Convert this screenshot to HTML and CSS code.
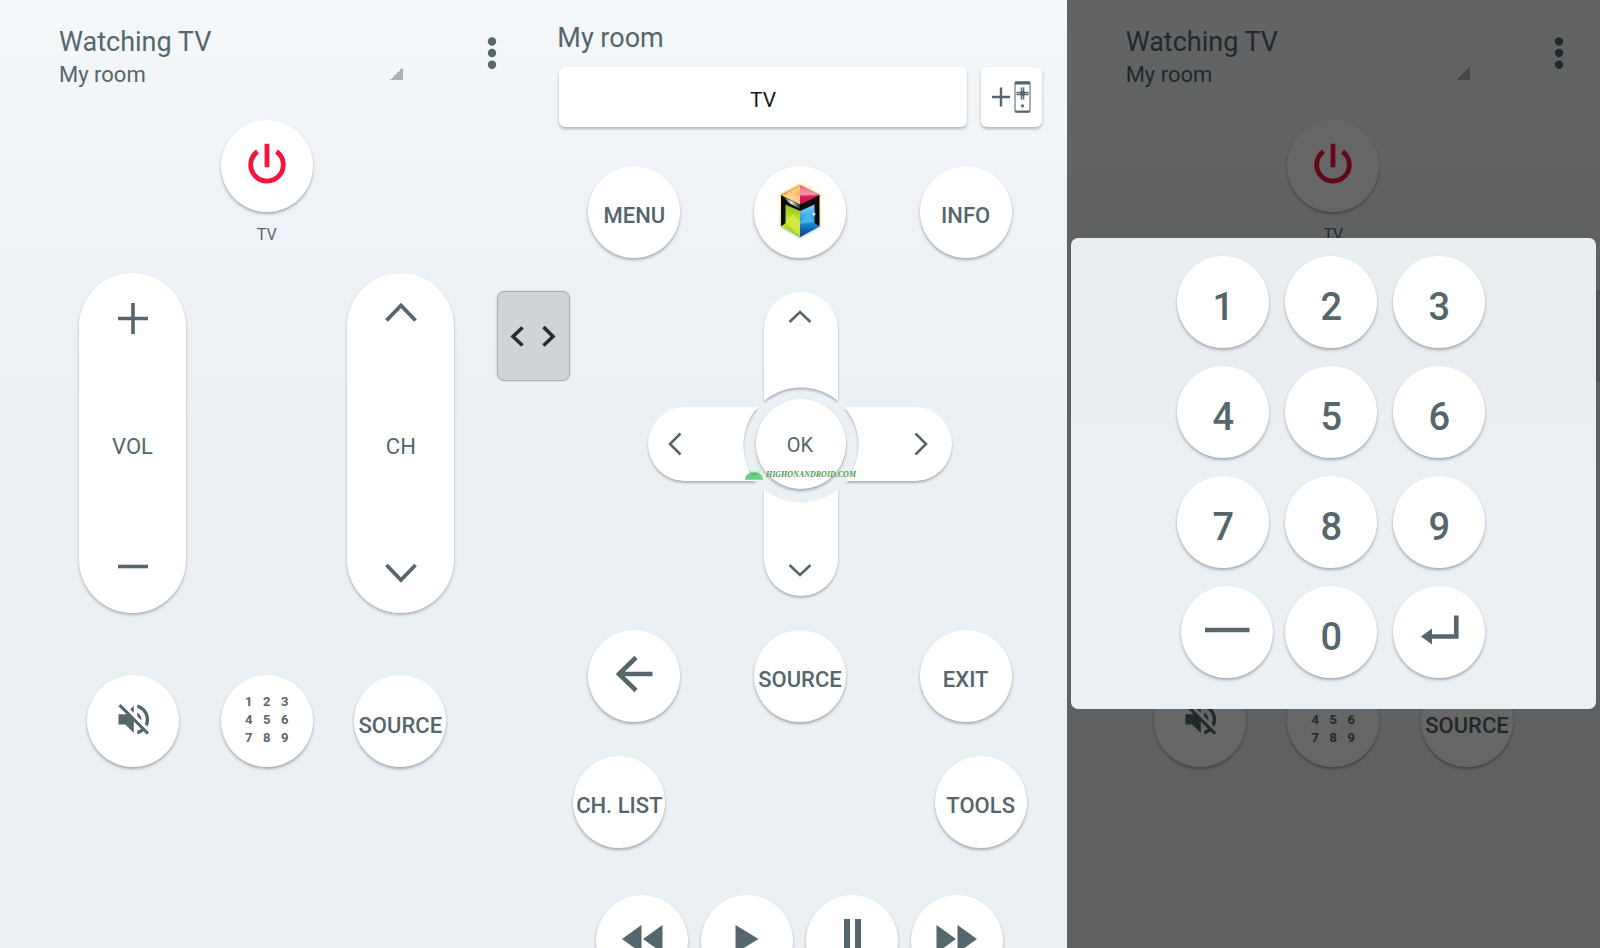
FILE: index.html
```html
<!DOCTYPE html>
<html lang="en">
<head>
<meta charset="utf-8">
<meta name="viewport" content="width=device-width, initial-scale=1">
<title>Watching TV</title>
<link rel="stylesheet" href="styles.css">
</head>
<body>
<svg class="defs" aria-hidden="true">
  <symbol id="power" viewBox="0 0 92 92"><path d="M36.5 31.5A16.3 16.3 0 1 0 55.5 31.5M46 23.7V47.3" fill="none" stroke="#f4143c" stroke-width="4.8"/></symbol>
  <symbol id="mute" viewBox="0 0 92 92"><path transform="translate(26.4 24) scale(1.7)" fill="currentColor" d="M16.5 12c0-1.77-1.02-3.29-2.5-4.03v2.21l2.45 2.45c.03-.2.05-.41.05-.63zm2.5 0c0 .94-.2 1.82-.54 2.64l1.51 1.51C20.63 14.91 21 13.5 21 12c0-4.28-2.99-7.86-7-8.77v2.06c2.89.86 5 3.54 5 6.71zM4.27 3L3 4.27 7.73 9H3v6h4l5 5v-6.73l4.25 4.25c-.67.52-1.42.93-2.25 1.18v2.06c1.38-.31 2.63-.95 3.69-1.81L19.73 21 21 19.73l-9-9L4.27 3zM12 4L9.91 6.09 12 8.18V4z"/></symbol>
  <symbol id="dots" viewBox="0 0 16 54"><g fill="currentColor"><circle cx="8" cy="15.5" r="4.2"/><circle cx="8" cy="27" r="4.2"/><circle cx="8" cy="38.8" r="4.2"/></g></symbol>
  <symbol id="plus" viewBox="0 0 32 42"><path d="M1 21.500H31M16 6V37" fill="none" stroke="currentColor" stroke-width="3.6"/></symbol>
  <symbol id="minus" viewBox="0 0 32 42"><path d="M1 21.500H31" fill="none" stroke="currentColor" stroke-width="3.6"/></symbol>
  <symbol id="up" viewBox="0 0 32 42"><path d="M1.500 23.500L16 8.500 30.500 23.500" fill="none" stroke="currentColor" stroke-width="3.8"/></symbol>
  <symbol id="down" viewBox="0 0 32 42"><path d="M1.500 20L16 35 30.500 20" fill="none" stroke="currentColor" stroke-width="3.8"/></symbol>
</svg>
<main class="app">
  <section class="panel">
    <header class="bar">
      <button class="spinner" type="button">
        <span class="title">Watching TV</span>
        <span class="room">My room</span>
      </button>
      <button class="more" type="button" aria-label="More options"><svg><use href="#dots"/></svg></button>
    </header>
    <div class="power">
      <button class="round" type="button" aria-label="Power"><svg><use href="#power"/></svg></button>
      <span class="caption">TV</span>
    </div>
    <div class="rockers">
      <div class="rocker" role="group" aria-label="Volume">
        <button type="button" aria-label="Volume up"><svg><use href="#plus"/></svg></button>
        <span>VOL</span>
        <button type="button" aria-label="Volume down"><svg><use href="#minus"/></svg></button>
      </div>
      <div class="rocker" role="group" aria-label="Channel">
        <button type="button" aria-label="Channel up"><svg><use href="#up"/></svg></button>
        <span>CH</span>
        <button type="button" aria-label="Channel down"><svg><use href="#down"/></svg></button>
      </div>
    </div>
    <div class="shortcuts">
      <button class="round" type="button" aria-label="Mute"><svg><use href="#mute"/></svg></button>
      <button class="round digits" type="button" aria-label="Number pad"><span>1</span><span>2</span><span>3</span><span>4</span><span>5</span><span>6</span><span>7</span><span>8</span><span>9</span></button>
      <button class="round" type="button">SOURCE</button>
    </div>
    <button class="handle" type="button" aria-label="Slide panel"><svg viewBox="0 0 73 90"><path d="M25.500 36.500L16 45.500 25.500 54.500M46.500 36L56 45.500 46.500 54.500" fill="none" stroke="#2b2b2e" stroke-width="3.6"/></svg></button>
  </section>

  <section class="panel controls">
    <h1 class="title">My room</h1>
    <div class="devices">
      <button class="device" type="button">TV</button>
      <button class="add" type="button" aria-label="Add remote">
        <svg viewBox="0 0 61 60"><g fill="none" stroke="currentColor"><path d="M11 30H29M20 20.500V39.500" stroke-width="2.4"/><rect x="34" y="15" width="15" height="30" rx="1.5" stroke-width="1.3" opacity=".8"/><path d="M34 16H49" stroke-width="3"/><path d="M34 44.500H49" stroke-width="2"/><path d="M35.500 26.500H47.500M41.500 20.500V32.500" stroke-width="3.6"/></g><path d="M36 26.500H39M44 26.500H47M41.500 21V24M41.500 29V32" stroke="#fff" stroke-width=".8" opacity=".8"/><circle cx="41.5" cy="38.800" r="1.6" fill="currentColor"/></svg>
      </button>
    </div>
    <div class="row first">
      <button class="round" type="button">MENU</button>
      <button class="round" type="button" aria-label="Smart Hub">
        <svg viewBox="0 0 92 92">
          <defs>
            <filter id="glow" x="-20%" y="-20%" width="140%" height="140%"><feGaussianBlur stdDeviation="1.3"/></filter>
            <linearGradient id="edge" x2="0" y2="1"><stop stop-color="#ffb45a"/><stop offset=".35" stop-color="#ffe9a0"/><stop offset=".6" stop-color="#d8f080"/><stop offset="1" stop-color="#62c6f5"/></linearGradient>
            <linearGradient id="warm" x2="1" y2="1"><stop stop-color="#f08a2c"/><stop offset=".5" stop-color="#fbd07a"/><stop offset="1" stop-color="#f08a5a"/></linearGradient>
            <linearGradient id="pink" x2="0" y2="1"><stop stop-color="#f0607a"/><stop offset=".45" stop-color="#f29ab0"/><stop offset=".6" stop-color="#e2256a"/><stop offset="1" stop-color="#d80f58"/></linearGradient>
            <linearGradient id="green" x2="0" y2="1"><stop stop-color="#8cc41c"/><stop offset=".45" stop-color="#c4e02e"/><stop offset="1" stop-color="#a2cc20"/></linearGradient>
            <linearGradient id="blue" x2="0" y2="1"><stop stop-color="#86d0f4"/><stop offset=".5" stop-color="#1d9ee0"/><stop offset=".75" stop-color="#1467b8"/><stop offset="1" stop-color="#2a2f8c"/></linearGradient>
            <linearGradient id="shine"><stop stop-color="#222"/><stop offset=".5" stop-color="#e8e8e8"/><stop offset="1" stop-color="#222"/></linearGradient>
          </defs>
          <path d="M46 18.500L66 28.500V60.500L46 71.500 26.500 60.500V28.500Z" fill="url(#edge)" stroke="url(#edge)" stroke-width="1" filter="url(#glow)"/>
          <path d="M46 19.500L65.500 29V59.500L46 70.500 27 59.500V29Z" fill="#0b0b0b"/>
          <path d="M46 19.500V38.500L27 29Z" fill="url(#warm)"/>
          <path d="M46 19.500V38.500L65.500 29Z" fill="url(#pink)"/>
          <path d="M27 29L46 30V38.500Z" fill="#ffe3a8" opacity=".55"/>
          <path d="M46 30L65.500 29 46 38.500Z" fill="#d80f58" opacity=".6"/>
          <path d="M29 30.500L46 39V43L35 37Z" fill="url(#shine)"/>
          <path d="M31.500 38.500L46 45V71L27 60.500 31.500 57Z" fill="url(#green)"/>
          <path d="M46 45L60.500 38.500V57L65.500 60.500 46 71Z" fill="url(#blue)"/>
          <path d="M31.500 56L39 48 46 56V70Z" fill="#e4ee52" opacity=".6"/>
          <path d="M46 56L54 48 60.500 56 46 58Z" fill="#5ec2f2" opacity=".6"/>
          <circle cx="60" cy="48" r="1.500" fill="#e8f8ff"/>
        </svg>
      </button>
      <button class="round" type="button">INFO</button>
    </div>
    <div class="dpad">
      <button class="arm arm-up" type="button" aria-label="Up"><svg viewBox="0 0 24 24"><path d="M1.500 17L12 7 22.500 17"/></svg></button>
      <button class="arm arm-left" type="button" aria-label="Left"><svg viewBox="0 0 24 24"><path d="M17.500 1.500L7 12 17.500 22.500"/></svg></button>
      <button class="ok" type="button">OK</button>
      <button class="arm arm-right" type="button" aria-label="Right"><svg viewBox="0 0 24 24"><path d="M6.500 1.500L17 12 6.500 22.500"/></svg></button>
      <button class="arm arm-down" type="button" aria-label="Down"><svg viewBox="0 0 24 24"><path d="M1.500 7L12 17 22.500 7"/></svg></button>
      <div class="watermark">
        <svg viewBox="0 0 18 10"><path d="M0 9.500C1 4.500 4.500 2 9 2S17 4.500 18 9.500ZM4 0L6 4M14 0L12 4" fill="#6fd083" stroke="#6fd083" stroke-width=".6"/><path d="M6 4.500H12" stroke="#3fae55" stroke-width="1"/></svg>
        <span>HIGHONANDROID.COM</span>
      </div>
    </div>
    <div class="row second">
      <button class="round" type="button" aria-label="Back"><svg viewBox="0 0 92 92"><path d="M64.500 44H31M48 27.500L31 44 48 60.500" fill="none" stroke="currentColor" stroke-width="4.600"/></svg></button>
      <button class="round" type="button">SOURCE</button>
      <button class="round" type="button">EXIT</button>
    </div>
    <div class="row third">
      <button class="round" type="button">CH. LIST</button>
      <button class="round" type="button">TOOLS</button>
    </div>
    <div class="playback">
      <button class="round" type="button" aria-label="Rewind"><svg viewBox="0 0 92 92"><path d="M45.500 30V58L26 44ZM66.500 30V58L47 44Z" fill="currentColor"/></svg></button>
      <button class="round" type="button" aria-label="Play"><svg viewBox="0 0 92 92"><path d="M34.500 30V58L57.500 44Z" fill="currentColor"/></svg></button>
      <button class="round" type="button" aria-label="Pause"><svg viewBox="0 0 92 92"><path d="M38 24H44V64H38ZM49 24H55V64H49Z" fill="currentColor"/></svg></button>
      <button class="round" type="button" aria-label="Fast forward"><svg viewBox="0 0 92 92"><path d="M25.500 30V58L45 44ZM46.500 30V58L66 44Z" fill="currentColor"/></svg></button>
    </div>
  </section>

  <section class="panel dimmed">
    <header class="bar">
      <button class="spinner" type="button">
        <span class="title">Watching TV</span>
        <span class="room">My room</span>
      </button>
      <button class="more" type="button" aria-label="More options"><svg><use href="#dots"/></svg></button>
    </header>
    <div class="power">
      <button class="round" type="button" aria-label="Power"><svg><use href="#power"/></svg></button>
      <span class="caption">TV</span>
    </div>
    <div class="rockers"><div class="rocker"></div></div>
    <div class="shortcuts">
      <button class="round" type="button" aria-label="Mute"><svg><use href="#mute"/></svg></button>
      <button class="round digits" type="button" aria-label="Number pad"><span>1</span><span>2</span><span>3</span><span>4</span><span>5</span><span>6</span><span>7</span><span>8</span><span>9</span></button>
      <button class="round" type="button">SOURCE</button>
    </div>
    <button class="handle" type="button" aria-label="Slide panel"></button>
    <div class="scrim">
      <div class="dialog" role="dialog" aria-label="Number pad">
        <button class="round key" type="button">1</button>
        <button class="round key" type="button">2</button>
        <button class="round key" type="button">3</button>
        <button class="round key" type="button">4</button>
        <button class="round key" type="button">5</button>
        <button class="round key" type="button">6</button>
        <button class="round key" type="button">7</button>
        <button class="round key" type="button">8</button>
        <button class="round key" type="button">9</button>
        <button class="round key dash" type="button" aria-label="Dash"><svg viewBox="0 0 92 92"><path d="M24 44H68.500" stroke="currentColor" stroke-width="4.600"/></svg></button>
        <button class="round key" type="button">0</button>
        <button class="round key" type="button" aria-label="Enter"><svg viewBox="0 0 92 92"><path d="M63.300 29.500V50.500H36" fill="none" stroke="currentColor" stroke-width="4.600"/><path d="M28 50.500L39 42.500V58.500Z" fill="currentColor"/></svg></button>
      </div>
    </div>
  </section>
</main>
</body>
</html>
```
FILE: styles.css
```css
* {
  box-sizing: border-box;
}

body {
  margin: 0;
  color: #55676c;
  font-family: Roboto, "Liberation Sans", sans-serif;
  font-size: 22px;
}

button {
  margin: 0;
  padding: 0;
  border: 0;
  background: none;
  color: inherit;
  font: inherit;
  cursor: pointer;
}

svg {
  display: block;
}

.defs {
  position: absolute;
  width: 0;
  height: 0;
}

.app {
  display: grid;
  grid-template: 100% / repeat(3, minmax(0, 1fr));
  height: 100vh;
  overflow: hidden;
  background: linear-gradient(#f4f8fb 0, #eff3f7 200px, #ebf0f5 420px);
}

.panel {
  position: relative;
  min-width: 0;
}

.bar {
  display: flex;
  align-items: flex-start;
  justify-content: space-between;
  gap: 81px;
  padding: 26px 33px 0 59px;
}

.spinner {
  display: grid;
  flex: 1;
  text-align: left;
  background: linear-gradient(135deg, transparent 50%, #b0b0b0 50%) right bottom 12px / 13px 13px no-repeat;
}

.title {
  margin: 0;
  font-size: 27px;
  font-weight: 400;
  line-height: 32px;
}

.room {
  line-height: 34px;
}

.more svg {
  width: 16px;
  height: 54px;
}

.power {
  display: flex;
  flex-direction: column;
  align-items: center;
  gap: 12px;
  margin-top: 28px;
}

.caption {
  font-size: 16px;
  line-height: 22px;
}

.round {
  display: grid;
  place-content: center;
  flex: none;
  width: 92px;
  height: 92px;
  padding-top: 8px;
  border-radius: 50%;
  background: #fff;
  box-shadow: 0 2px 3px rgba(40, 50, 55, .36);
  font-weight: 500;
  line-height: 26px;
  white-space: nowrap;
}

.round:has(svg) {
  padding: 0;
}

.round svg {
  width: 92px;
  height: 92px;
}

.rockers {
  display: flex;
  justify-content: space-between;
  margin-top: 27px;
  padding: 0 79px;
}

.rocker {
  display: flex;
  flex-direction: column;
  align-items: center;
  justify-content: space-between;
  width: 107px;
  height: 340px;
  padding: 24px 0 26px;
  border-radius: 54px;
  background: #fff;
  box-shadow: 0 2px 3px rgba(40, 50, 55, .32);
}

.rocker span {
  padding-top: 8px;
}

.rocker svg {
  width: 32px;
  height: 42px;
}

.shortcuts {
  display: flex;
  justify-content: space-between;
  margin-top: 62px;
  padding: 0 87px;
}

.shortcuts .round:not(:has(svg)) {
  padding-top: 10px;
}

.shortcuts .digits:not(:has(svg)) {
  grid-template-columns: repeat(3, 18px);
  grid-auto-rows: 18px;
  padding: 0 0 2px;
  font-size: 13px;
  font-weight: 700;
  line-height: 18px;
}

.handle {
  position: absolute;
  z-index: 2;
  top: 291px;
  right: -37px;
  width: 73px;
  height: 90px;
  border: 1px solid #a9afb2;
  border-radius: 8px;
  background: #ced4d7;
  box-shadow: 0 0 2px rgba(40, 50, 55, .3);
}

.handle svg {
  margin: -1px;
}

.controls {
  padding-top: 22px;
}

.controls > .title {
  padding-left: 24px;
}

.devices {
  display: flex;
  gap: 14px;
  margin-top: 13px;
  padding: 0 25px 0 26px;
}

.device,
.add {
  height: 60px;
  border-radius: 6px;
  background: #fff;
  box-shadow: 0 2px 3px rgba(40, 50, 55, .32);
}

.device {
  flex: 1;
  padding-top: 5px;
  color: #111820;
  font-size: 21px;
}

.add {
  width: 61px;
}

.row {
  display: flex;
  justify-content: space-between;
  padding: 0 55px;
}

.first {
  margin-top: 39px;
}

.second {
  margin-top: 34px;
}

.third {
  margin-top: 34px;
  padding: 0 40px;
}

.playback {
  display: flex;
  justify-content: center;
  gap: 13px;
  margin-top: 47px;
}

.dpad {
  position: relative;
  display: grid;
  grid-template: 115px 74px 115px / 116px 74px 114px;
  width: 304px;
  margin: 34px auto 0;
}

.arm {
  display: grid;
  align-items: center;
  justify-items: center;
  filter: drop-shadow(0 2px 1px rgba(40, 50, 55, .32));
}

.arm svg {
  width: 24px;
  height: 24px;
  fill: none;
  stroke: currentColor;
  stroke-width: 2.6px;
}

.arm-up {
  grid-area: 1 / 2;
  align-items: start;
  padding: 13px 2px 0 0;
  border-radius: 37px 37px 0 0;
  background: radial-gradient(circle at 37px 153px, transparent 57px, #fff 58px);
}

.arm-left {
  grid-area: 2 / 1;
  justify-items: start;
  padding-left: 15px;
  border-radius: 37px 0 0 37px;
  background: radial-gradient(circle at 153px 38px, transparent 57px, #fff 58px);
}

.arm-right {
  grid-area: 2 / 3;
  justify-items: end;
  padding-right: 19px;
  border-radius: 0 37px 37px 0;
  background: radial-gradient(circle at -37px 38px, transparent 57px, #fff 58px);
}

.arm-down {
  grid-area: 3 / 2;
  align-items: end;
  padding: 0 2px 14px 0;
  border-radius: 0 0 37px 37px;
  background: radial-gradient(circle at 37px -36px, transparent 57px, #fff 58px);
}

.ok {
  grid-area: 2 / 2;
  place-self: center;
  width: 90px;
  height: 90px;
  margin: -8px;
  padding: 2px 2px 0 0;
  border-radius: 50%;
  background: #fff;
  box-shadow: 0 2px 3px rgba(40, 50, 55, .36);
  font-size: 20px;
}

.watermark {
  position: absolute;
  top: 178px;
  left: 97px;
  display: flex;
  align-items: center;
  gap: 3px;
  color: #4c9a4f;
  font: italic 700 8px/10px "Liberation Serif", serif;
}

.watermark svg {
  width: 18px;
  height: 10px;
}

.dimmed {
  overflow: hidden;
}

.scrim {
  position: absolute;
  z-index: 3;
  inset: 0;
  display: grid;
  place-items: center;
  padding: 0 4px 2px;
  background: rgba(0, 0, 0, .6);
}

.dialog {
  display: grid;
  grid-template-columns: repeat(3, 96px);
  justify-content: center;
  gap: 18px 12px;
  width: 100%;
  padding: 18px 0 31px;
  border-radius: 7px;
  background: linear-gradient(#e9eef0, #e9edf2 25%, #ebf0f5 50%);
}

.key {
  padding-top: 10px;
  font-size: 38px;
  line-height: 44px;
}

.dash {
  justify-self: end;
}
```
